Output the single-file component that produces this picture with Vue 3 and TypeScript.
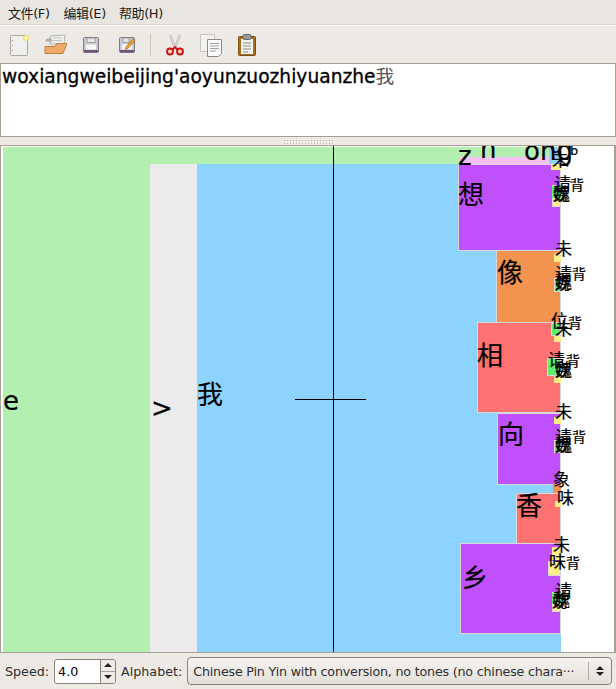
<script setup lang="ts">
interface Box { x: number; y: number; w: number; h: number; c: string; b?: boolean }
interface Label { t: string; x: number; y: number; s: number }

const boxes: Box[] = [
  { x: 3, y: 147, w: 147, h: 505, c: '#b3f0b0' },
  { x: 150, y: 147, w: 410, h: 17, c: '#b3f0b0' },
  { x: 150, y: 164, w: 47, h: 488, c: '#ebebeb' },
  { x: 197, y: 164, w: 363, h: 488, c: '#8cd4ff' },
  { x: 459, y: 157, w: 90, h: 7, c: '#f8c0f8' },
  { x: 549, y: 147, w: 11, h: 17, c: '#8cd4ff' },
  { x: 458, y: 164, w: 102, h: 87, c: '#c050fc', b: true },
  { x: 551, y: 164, w: 9, h: 6, c: '#ffee88' },
  { x: 552, y: 185, w: 8, h: 22, c: '#ffee88', b: true },
  { x: 552, y: 186, w: 8, h: 12, c: '#60f070' },
  { x: 496, y: 250, w: 64, h: 73, c: '#f2934f', b: true },
  { x: 554, y: 254, w: 6, h: 8, c: '#ffee88' },
  { x: 554, y: 278, w: 6, h: 14, c: '#60f070', b: true },
  { x: 477, y: 322, w: 83, h: 91, c: '#ff7272', b: true },
  { x: 551, y: 323, w: 9, h: 13, c: '#60f070', b: true },
  { x: 554, y: 336, w: 6, h: 6, c: '#ffee88' },
  { x: 547, y: 358, w: 13, h: 18, c: '#60f070', b: true },
  { x: 554, y: 376, w: 6, h: 7, c: '#ffee88' },
  { x: 497, y: 413, w: 63, h: 72, c: '#c050fc', b: true },
  { x: 554, y: 417, w: 6, h: 7, c: '#ffee88' },
  { x: 554, y: 440, w: 6, h: 13, c: '#60f070', b: true },
  { x: 553, y: 484, w: 7, h: 9, c: '#f2934f' },
  { x: 516, y: 493, w: 44, h: 51, c: '#ff7272', b: true },
  { x: 555, y: 501, w: 5, h: 6, c: '#ffee88' },
  { x: 460, y: 543, w: 100, h: 91, c: '#c050fc', b: true },
  { x: 552, y: 547, w: 8, h: 13, c: '#ffee88' },
  { x: 548, y: 561, w: 12, h: 15, c: '#ffee88', b: true },
  { x: 552, y: 592, w: 8, h: 20, c: '#ffee88', b: true },
  { x: 552, y: 593, w: 8, h: 11, c: '#60f070' },
]

const labels: Label[] = [
  { t: 'e', x: 3, y: 387, s: 26 },
  { t: '>', x: 151, y: 394, s: 26 },
  { t: '我', x: 197, y: 381, s: 26 },
  { t: 'z', x: 458, y: 142, s: 26 },
  { t: 'n', x: 480, y: 135, s: 26 },
  { t: 'ong', x: 524, y: 137, s: 26 },
  { t: 'u', x: 550, y: 135, s: 20 },
  { t: 'b', x: 570, y: 144, s: 13 },
  { t: '想', x: 458, y: 181, s: 26 },
  { t: '未', x: 552, y: 151, s: 17 },
  { t: '请', x: 554, y: 175, s: 17 },
  { t: '背', x: 570, y: 177, s: 14 },
  { t: '魏', x: 553, y: 185, s: 17 },
  { t: '娩', x: 553, y: 187, s: 15 },
  { t: '像', x: 497, y: 259, s: 26 },
  { t: '未', x: 555, y: 240, s: 17 },
  { t: '请', x: 555, y: 265, s: 17 },
  { t: '背', x: 572, y: 266, s: 14 },
  { t: '魏', x: 555, y: 273, s: 17 },
  { t: '娩', x: 555, y: 276, s: 15 },
  { t: '位', x: 551, y: 312, s: 17 },
  { t: '背', x: 568, y: 315, s: 14 },
  { t: '未', x: 555, y: 320, s: 17 },
  { t: '相', x: 477, y: 342, s: 26 },
  { t: '请', x: 548, y: 351, s: 17 },
  { t: '背', x: 566, y: 353, s: 14 },
  { t: '魏', x: 555, y: 361, s: 17 },
  { t: '娩', x: 555, y: 363, s: 15 },
  { t: '未', x: 555, y: 403, s: 17 },
  { t: '向', x: 498, y: 421, s: 26 },
  { t: '请', x: 555, y: 428, s: 17 },
  { t: '背', x: 572, y: 429, s: 14 },
  { t: '魏', x: 555, y: 436, s: 17 },
  { t: '娩', x: 555, y: 438, s: 15 },
  { t: '象', x: 553, y: 471, s: 17 },
  { t: '味', x: 557, y: 489, s: 17 },
  { t: '香', x: 516, y: 492, s: 26 },
  { t: '未', x: 553, y: 536, s: 17 },
  { t: '味', x: 549, y: 553, s: 17 },
  { t: '背', x: 566, y: 555, s: 14 },
  { t: '乡', x: 462, y: 564, s: 26 },
  { t: '请', x: 555, y: 582, s: 17 },
  { t: '魏', x: 553, y: 591, s: 17 },
  { t: '娩', x: 552, y: 594, s: 15 },
]

function boxStyle(b: Box) {
  return { left: `${b.x}px`, top: `${b.y - 146}px`, width: `${b.w + 1}px`, height: `${b.h}px`, background: b.c }
}
function labelStyle(l: Label) {
  return { left: `${l.x}px`, top: `${l.y - 146}px`, fontSize: `${l.s}px` }
}
</script>

<template>
  <div class="app">
    <div class="menubar">
      <span class="menu">文件(F)</span>
      <span class="menu">编辑(E)</span>
      <span class="menu">帮助(H)</span>
    </div>
    <div class="toolbar">
      <svg class="tool" viewBox="0 0 24 24"><rect x="3.500" y="2.500" width="17" height="20" rx="1" fill="#efefed" stroke="#a8a8a4"/><path d="M5.500 7v1M5.500 12v1M5.500 17v1" stroke="#888"/><circle cx="19" cy="5" r="2.500" fill="#fff6a0" stroke="#ecdf60"/></svg>
      <svg class="tool" viewBox="0 0 24 24"><path d="M7 6l1-3 14-1-1 9H7z" fill="#eeeeec" stroke="#b4b4b0"/><path d="M10 5h9M10 7.500h9" stroke="#c4c4c0"/><path d="M3 8l1-2h4l1 2z" fill="#c8c8c4" stroke="#a0a09c"/><path d="M2 13.500h10l2-3h10l-4 10H2z" fill="#f0aa66" stroke="#b98345"/></svg>
      <svg class="tool" viewBox="0 0 24 24"><rect x="4.500" y="4.500" width="15" height="15" rx="1" fill="#c9c9d2" stroke="#7c7b85"/><rect x="8" y="5" width="8" height="4.500" fill="#e6e6e8" stroke="#8a8a90" stroke-width=".7"/><rect x="7" y="11.500" width="10" height="5" fill="#f6f6f6"/><rect x="5" y="17" width="14" height="2.200" fill="#75507b"/></svg>
      <svg class="tool" viewBox="0 0 24 24"><rect x="4.500" y="4.500" width="15" height="15" rx="1" fill="#c9c9d2" stroke="#7c7b85"/><rect x="8" y="5" width="6" height="4.500" fill="#e6e6e8" stroke="#8a8a90" stroke-width=".7"/><rect x="7" y="11.500" width="10" height="5" fill="#f6f6f6"/><rect x="5" y="17" width="14" height="2.200" fill="#75507b"/><path d="M11 14l7-8.500 2 1.800-7 8.200-2.800.8z" fill="#f0a030" stroke="#a06010" stroke-width=".6"/></svg>
      <span class="sep"></span>
      <svg class="tool" viewBox="0 0 24 24"><path d="M7 2l6 15M17 2l-6 15" stroke="#b8b8b8" stroke-width="2.200"/><path d="M7 2l6 15M17 2l-6 15" stroke="#e4e4e4" stroke-width=".8"/><circle cx="7" cy="18.500" r="3" fill="#f8d0d0" stroke="#cc1010" stroke-width="1.800"/><circle cx="17" cy="18.500" r="3" fill="#f8d0d0" stroke="#cc1010" stroke-width="1.800"/><path d="M9.500 16.500L12 14l2.500 2.500" stroke="#cc1010" stroke-width="1.800" fill="none"/></svg>
      <svg class="tool" viewBox="0 0 24 24"><path d="M1.500 1.500h14v17h-14z" fill="#f2f2f0" stroke="#c4c4c0"/><path d="M8.500 6.500h14v14l-3 3h-11z" fill="#fafafa" stroke="#8a8a86"/><path d="M11 10.500h9M11 13h9M11 15.500h9M11 18h6" stroke="#a0a09c"/></svg>
      <svg class="tool" viewBox="0 0 24 24"><rect x="3.500" y="3.500" width="17" height="19" rx="1" fill="#a96f1c" stroke="#7a4f10"/><path d="M6 6h12v15H6z" fill="#f2f2ee"/><rect x="8" y="1.500" width="8" height="5" rx="1.500" fill="#9a9a96" stroke="#666"/><path d="M8 10h8M8 13h8M8 16h8M8 19h5" stroke="#8a8a86"/></svg>
    </div>
    <div class="editor"><span class="pinyin">woxiangweibeijing'aoyunzuozhiyuanzhe</span><span class="han">我</span></div>
    <div class="handle"><span class="grip"></span></div>
    <div class="frame">
      <div v-for="(b, i) in boxes" :key="i" class="node" :class="{ edged: b.b }" :style="boxStyle(b)"></div>
      <span v-for="(l, i) in labels" :key="'l' + i" class="label" :style="labelStyle(l)">{{ l.t }}</span>
      <div class="hair-v"></div>
      <div class="hair-h"></div>
    </div>
    <div class="statusbar">
      <span class="field-label">Speed:</span>
      <div class="spin">
        <span class="spin-value">4.0</span>
        <span class="spin-btns">
          <span class="spin-btn"><i class="up"></i></span>
          <span class="spin-btn"><i class="down"></i></span>
        </span>
      </div>
      <span class="field-label">Alphabet:</span>
      <div class="combo">
        <span class="combo-text">Chinese Pin Yin with conversion, no tones (no chinese chara···</span>
        <span class="combo-arrows"><i class="up"></i><i class="down"></i></span>
      </div>
    </div>
  </div>
</template>

<style>
html, body { margin: 0; background: #edeae5; }
</style>

<style scoped>
.app {
  width: 616px;
  height: 689px;
  display: flex;
  flex-direction: column;
  overflow: hidden;
  background: #edeae5;
  font-family: "DejaVu Sans", "Noto Sans CJK SC", sans-serif;
  color: #1a1a1a;
}
.menubar {
  height: 24px;
  flex: none;
  display: flex;
  align-items: center;
  gap: 13.500px;
  padding: 0 8px;
  background: #e9e5e0;
  border-bottom: 1px solid #d8d3cc;
  font-size: 13px;
  letter-spacing: -0.4px;
}
.menu { width: 42px; white-space: nowrap; }
.toolbar {
  height: 37px;
  flex: none;
  display: flex;
  align-items: center;
  padding: 0 7px;
  gap: 12px;
  border-top: 1px solid #fbfaf8;
}
.tool { width: 24px; height: 24px; flex: none; }
.sep { width: 1px; height: 22px; background: #c8c4bc; margin-left: -1px; flex: none; }
.editor {
  height: 74px;
  flex: none;
  box-sizing: border-box;
  background: #fff;
  border: 1px solid #a89f93;
  padding: 1px 1px;
  line-height: 23px;
  white-space: nowrap;
  color: #000;
}
.pinyin { font-size: 18.670px; -webkit-text-stroke: 0.3px #000; }
.han { font-size: 18.670px; color: #555; }
.handle {
  height: 8px;
  flex: none;
  display: flex;
  justify-content: flex-end;
  align-items: center;
  padding-right: 283px;
}
.grip {
  width: 50px;
  height: 5px;
  background-image: radial-gradient(circle, #b5b0a8 0.8px, transparent 1px);
  background-size: 3px 3px;
}
.frame {
  position: relative;
  height: 508px;
  flex: none;
  background: #fff;
  border: 1px solid #a89f93;
  border-right-width: 2px;
  box-sizing: border-box;
  overflow: hidden;
}
.node { position: absolute; box-sizing: border-box; margin-left: -1px; }
.edged { border: 1px solid #d8d8d8; }
.label {
  position: absolute;
  margin-left: -1px;
  line-height: 1.150;
  color: #000;
  -webkit-text-stroke: 0.2px #000;
  font-family: "DejaVu Sans", "Noto Sans CJK SC", sans-serif;
  white-space: nowrap;
}
.hair-v { position: absolute; left: 332px; top: 0; bottom: 0; width: 1px; background: #000; }
.hair-h { position: absolute; left: 294px; top: 253px; width: 71px; height: 1px; background: #000; }
.statusbar {
  flex: 1;
  display: flex;
  align-items: center;
  padding: 0 4px 0 5px;
  font-size: 12.700px;
}
.field-label { flex: none; color: #2e2e2e; white-space: nowrap; }
.spin {
  flex: none;
  display: flex;
  width: 62px;
  height: 25px;
  margin: 0 5px;
  box-sizing: border-box;
  border: 1px solid #8a8278;
  border-radius: 3px;
  background: #fff;
  overflow: hidden;
}
.spin-value { flex: 1; padding-left: 3px; line-height: 23px; color: #000; }
.spin-btns {
  width: 14px;
  display: flex;
  flex-direction: column;
  border-left: 1px solid #8a8278;
  background: #efece7;
}
.spin-btn { flex: 1; display: flex; align-items: center; justify-content: center; }
.spin-btn + .spin-btn { border-top: 1px solid #a8a298; }
.up, .down { display: block; width: 0; height: 0; border-left: 4px solid transparent; border-right: 4px solid transparent; }
.up { border-bottom: 4px solid #222; }
.down { border-top: 4px solid #222; }
.combo {
  flex: 1;
  height: 28px;
  margin-left: 5px;
  box-sizing: border-box;
  display: flex;
  align-items: center;
  border: 1px solid #8a8278;
  border-radius: 4px;
  background: linear-gradient(#f6f4f1, #e3dfd9);
  padding-left: 5px;
  min-width: 0;
}
.combo-text { flex: 1; white-space: nowrap; overflow: hidden; color: #2e2e2e; letter-spacing: -0.2px; }
.combo-arrows {
  flex: none;
  width: 19px;
  height: 18px;
  margin-right: 2px;
  padding-left: 1px;
  border-left: 1px solid #b0aba2;
  display: flex;
  flex-direction: column;
  align-items: center;
  justify-content: center;
  gap: 2px;
}
</style>
